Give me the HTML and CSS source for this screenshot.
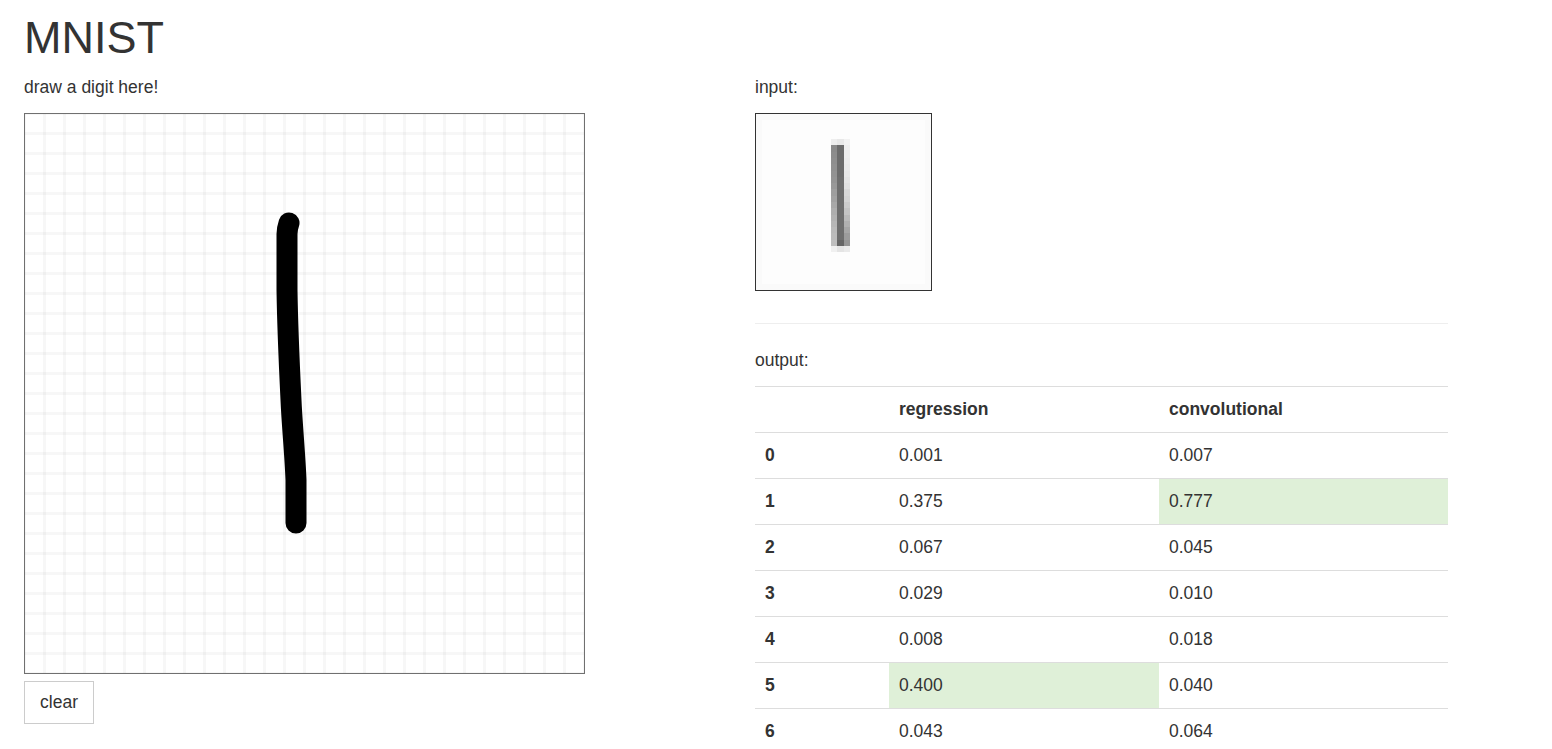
FILE: index.html
```html
<!DOCTYPE html>
<html lang="en">
<head>
<meta charset="utf-8">
<title>MNIST</title>
<link rel="stylesheet" href="styles.css">
</head>
<body>
<h1 class="title">MNIST</h1>
<main class="columns">
  <section class="draw">
    <p class="label">draw a digit here!</p>
    <div class="pad">
      <svg class="stroke" viewBox="0 0 559 559" width="559" height="559">
        <path d="M264 109 C263 112 262 115 262 120 L262 176 C262.5 210 264 245 266 286 C267 310 270 340 271 366 L271 409" fill="none" stroke="#000" stroke-width="21" stroke-linecap="round" stroke-linejoin="round"/>
      </svg>
    </div>
    <button class="clear" type="button">clear</button>
  </section>
  <section class="results">
    <p class="label">input:</p>
    <div class="preview">
      <svg class="pixels" viewBox="0 0 28 28" width="175" height="176" preserveAspectRatio="none" shape-rendering="crispEdges">
        <g class="digit">
        <rect width="28" height="28" fill="#fafafa"/>
        <rect x="1" y="1" width="26" height="26" fill="#fdfdfd"/>
        <rect x="12" y="4" width="1" height="1" fill="#eeeeee"/><rect x="13" y="4" width="1" height="1" fill="#e8e8e8"/><rect x="14" y="4" width="1" height="1" fill="#f2f2f2"/>
        <rect x="12" y="5" width="1" height="1" fill="#8a8a8a"/><rect x="13" y="5" width="1" height="1" fill="#6c6c6c"/><rect x="14" y="5" width="1" height="1" fill="#eeeeee"/>
        <rect x="12" y="6" width="1" height="1" fill="#8c8c8c"/><rect x="13" y="6" width="1" height="1" fill="#6c6c6c"/><rect x="14" y="6" width="1" height="1" fill="#eeeeee"/>
        <rect x="12" y="7" width="1" height="1" fill="#8e8e8e"/><rect x="13" y="7" width="1" height="1" fill="#6c6c6c"/><rect x="14" y="7" width="1" height="1" fill="#ececec"/>
        <rect x="12" y="8" width="1" height="1" fill="#909090"/><rect x="13" y="8" width="1" height="1" fill="#6c6c6c"/><rect x="14" y="8" width="1" height="1" fill="#eaeaea"/>
        <rect x="12" y="9" width="1" height="1" fill="#929292"/><rect x="13" y="9" width="1" height="1" fill="#6c6c6c"/><rect x="14" y="9" width="1" height="1" fill="#e8e8e8"/>
        <rect x="12" y="10" width="1" height="1" fill="#949494"/><rect x="13" y="10" width="1" height="1" fill="#6e6e6e"/><rect x="14" y="10" width="1" height="1" fill="#e4e4e4"/>
        <rect x="12" y="11" width="1" height="1" fill="#989898"/><rect x="13" y="11" width="1" height="1" fill="#6e6e6e"/><rect x="14" y="11" width="1" height="1" fill="#e0e0e0"/>
        <rect x="12" y="12" width="1" height="1" fill="#9e9e9e"/><rect x="13" y="12" width="1" height="1" fill="#6e6e6e"/><rect x="14" y="12" width="1" height="1" fill="#d8d8d8"/>
        <rect x="12" y="13" width="1" height="1" fill="#a2a2a2"/><rect x="13" y="13" width="1" height="1" fill="#6e6e6e"/><rect x="14" y="13" width="1" height="1" fill="#d4d4d4"/>
        <rect x="12" y="14" width="1" height="1" fill="#a8a8a8"/><rect x="13" y="14" width="1" height="1" fill="#6e6e6e"/><rect x="14" y="14" width="1" height="1" fill="#cccccc"/>
        <rect x="12" y="15" width="1" height="1" fill="#aeaeae"/><rect x="13" y="15" width="1" height="1" fill="#6e6e6e"/><rect x="14" y="15" width="1" height="1" fill="#c4c4c4"/>
        <rect x="12" y="16" width="1" height="1" fill="#b2b2b2"/><rect x="13" y="16" width="1" height="1" fill="#6e6e6e"/><rect x="14" y="16" width="1" height="1" fill="#bababa"/>
        <rect x="12" y="17" width="1" height="1" fill="#b6b6b6"/><rect x="13" y="17" width="1" height="1" fill="#6e6e6e"/><rect x="14" y="17" width="1" height="1" fill="#b0b0b0"/>
        <rect x="12" y="18" width="1" height="1" fill="#bababa"/><rect x="13" y="18" width="1" height="1" fill="#6e6e6e"/><rect x="14" y="18" width="1" height="1" fill="#a6a6a6"/>
        <rect x="12" y="19" width="1" height="1" fill="#bcbcbc"/><rect x="13" y="19" width="1" height="1" fill="#6e6e6e"/><rect x="14" y="19" width="1" height="1" fill="#9c9c9c"/>
        <rect x="12" y="20" width="1" height="1" fill="#bebebe"/><rect x="13" y="20" width="1" height="1" fill="#646464"/><rect x="14" y="20" width="1" height="1" fill="#949494"/>
        <rect x="12" y="21" width="1" height="1" fill="#f0f0f0"/><rect x="13" y="21" width="1" height="1" fill="#e4e4e4"/><rect x="14" y="21" width="1" height="1" fill="#eaeaea"/>
        </g>
      </svg>
    </div>
    <hr class="rule">
    <p class="label">output:</p>
    <table class="scores">
      <thead>
        <tr><th></th><th>regression</th><th>convolutional</th></tr>
      </thead>
      <tbody>
        <tr><th>0</th><td>0.001</td><td>0.007</td></tr>
        <tr><th>1</th><td>0.375</td><td class="best">0.777</td></tr>
        <tr><th>2</th><td>0.067</td><td>0.045</td></tr>
        <tr><th>3</th><td>0.029</td><td>0.010</td></tr>
        <tr><th>4</th><td>0.008</td><td>0.018</td></tr>
        <tr><th>5</th><td class="best">0.400</td><td>0.040</td></tr>
        <tr><th>6</th><td>0.043</td><td>0.064</td></tr>
      </tbody>
    </table>
  </section>
</main>
</body>
</html>
```

FILE: styles.css
```css
html, body {
  height: 100%;
  overflow: hidden;
}

body {
  margin: 0;
  padding: 0 24px;
  box-sizing: border-box;
  background: #fff;
  color: #333;
  font-family: "Liberation Sans", Arial, sans-serif;
  font-size: 17.5px;
  line-height: 25px;
}

.title {
  margin: 0;
  padding-top: 13px;
  height: 74px;
  box-sizing: border-box;
  font-size: 45px;
  font-weight: 400;
  line-height: 50px;
}

.columns {
  display: grid;
  grid-template-columns: 731px 693px;
}

.draw {
  display: flex;
  flex-direction: column;
  align-items: flex-start;
}

.label {
  margin: 0 0 13px;
  height: 26px;
  line-height: 27px;
}

.pad {
  border: 1px solid #707070;
  width: 559px;
  height: 559px;
  background-color: #fff;
  background-image:
    linear-gradient(90deg, rgba(0, 0, 0, 0) 8.5px, rgba(0, 0, 0, 0.03) 9.5px, rgba(0, 0, 0, 0.03) 11.5px, rgba(0, 0, 0, 0) 12.5px),
    linear-gradient(180deg, rgba(0, 0, 0, 0) 8.5px, rgba(0, 0, 0, 0.03) 9.5px, rgba(0, 0, 0, 0.03) 11.5px, rgba(0, 0, 0, 0) 12.5px);
  background-size: 20px 20px;
  background-position: 9px 9px;
}

.stroke {
  display: block;
}

.clear {
  margin-top: 7px;
  width: 70px;
  height: 43px;
  padding: 0;
  border: 1px solid #ccc;
  border-radius: 0;
  background: #fff;
  color: #333;
  font: inherit;
}

.preview {
  width: 175px;
  height: 176px;
  border: 1px solid #333;
  overflow: hidden;
}

.pixels {
  display: block;
}

.digit {
  filter: blur(0.12px);
}

.rule {
  margin: 32px 0 23px;
  border: 0;
  border-top: 1px solid #eee;
}

.scores {
  width: 693px;
  table-layout: fixed;
  border-collapse: collapse;
}

.scores th,
.scores td {
  height: 45px;
  padding: 0 10px;
  border-top: 1px solid #ddd;
  text-align: left;
  vertical-align: middle;
}

.scores th {
  font-weight: 700;
}

.scores th:first-child {
  width: 114px;
}

.scores th:nth-child(2) {
  width: 250px;
}

.scores td.best {
  background: #dff0d8;
}
```
